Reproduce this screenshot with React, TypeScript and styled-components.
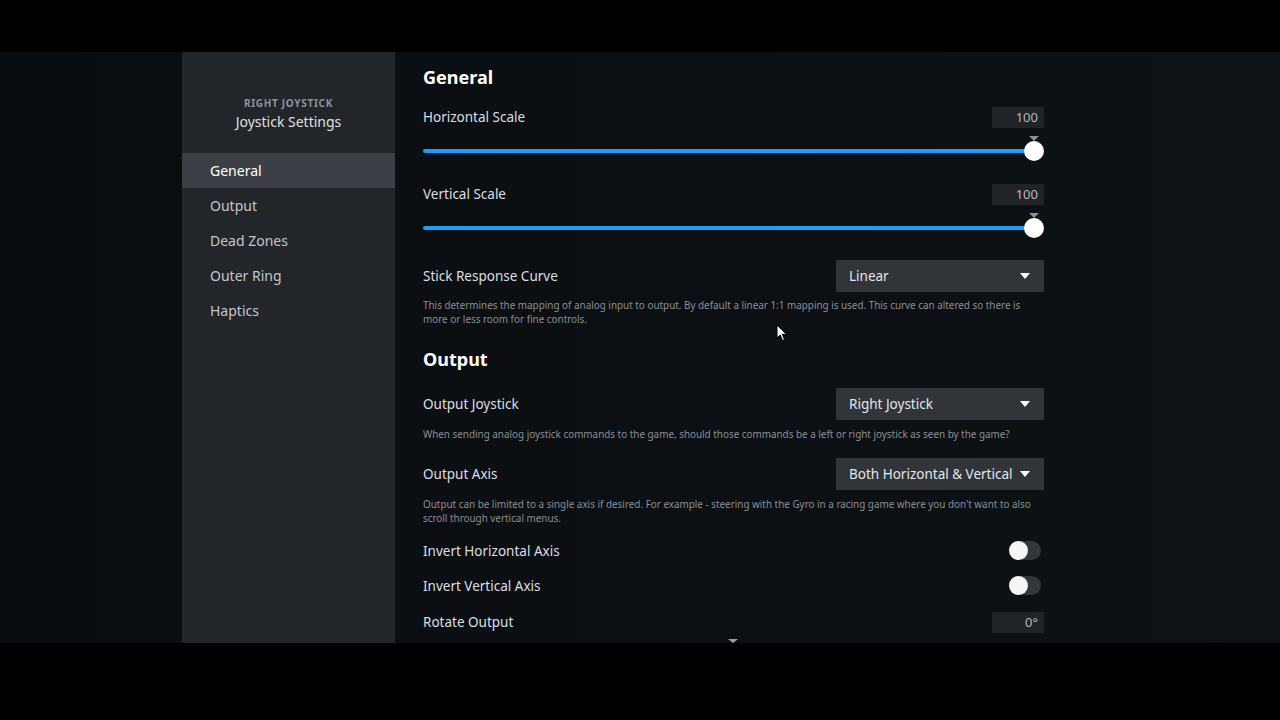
import styled, { createGlobalStyle } from "styled-components";

const GlobalStyle = createGlobalStyle`
  html, body {
    margin: 0;
    padding: 0;
    background: #000;
    font-family: "Noto Sans", "Open Sans", Arial, sans-serif;
  }
`;

const Page = styled.div`
  width: 1280px;
  height: 720px;
  display: flex;
  flex-direction: column;
  background: #000;
  overflow: hidden;
`;

const Letterbox = styled.div<{ $h: number }>`
  height: ${(p) => p.$h}px;
  flex-shrink: 0;
  background: #000;
`;

const Main = styled.div`
  position: relative;
  height: 591px;
  flex-shrink: 0;
  display: flex;
  background: linear-gradient(90deg, #0a0d10 0%, #0c1014 60%, #0d1215 100%);
  overflow: hidden;
`;

const Gutter = styled.div`
  width: 182px;
  flex-shrink: 0;
`;

const Sidebar = styled.nav`
  width: 213px;
  flex-shrink: 0;
  background: #22252a;
  display: flex;
  flex-direction: column;
`;

const SideHeader = styled.div`
  padding: 45px 0 22px;
  display: flex;
  flex-direction: column;
  align-items: center;
  gap: 4px;
`;

const Eyebrow = styled.div`
  font-size: 10px;
  line-height: 12px;
  font-weight: 700;
  letter-spacing: 0.7px;
  color: #8e949a;
`;

const SideTitle = styled.div`
  font-size: 14px;
  line-height: 18px;
  color: #dfe1e3;
`;

const NavItem = styled.div<{ $active?: boolean }>`
  height: 35px;
  flex-shrink: 0;
  display: flex;
  align-items: center;
  padding-left: 28px;
  font-size: 14px;
  color: ${(p) => (p.$active ? "#ffffff" : "#c3c7cb")};
  background: ${(p) => (p.$active ? "#3c4046" : "transparent")};
`;

const Content = styled.div`
  width: 621px;
  padding: 14px 0 0 28px;
  display: flex;
  flex-direction: column;

  & > * {
    flex-shrink: 0;
  }
`;

const SectionTitle = styled.h2<{ $mt?: number }>`
  margin: ${(p) => p.$mt ?? 0}px 0 0;
  font-size: 18px;
  line-height: 22px;
  font-weight: 700;
  color: #ffffff;
`;

const Row = styled.div<{ $h: number; $mt?: number }>`
  height: ${(p) => p.$h}px;
  margin-top: ${(p) => p.$mt ?? 0}px;
  display: flex;
  align-items: center;
  justify-content: space-between;
`;

const Label = styled.span`
  font-size: 13.5px;
  color: #dcdfe2;
`;

const ValueBox = styled.div`
  width: 52px;
  height: 21px;
  box-sizing: border-box;
  padding-right: 6px;
  background: #202327;
  color: #b6babe;
  font-size: 13px;
  display: flex;
  align-items: center;
  justify-content: flex-end;
`;

const SliderArea = styled.div`
  position: relative;
  height: 55px;
`;

const Track = styled.div`
  position: absolute;
  left: 0;
  right: 10px;
  top: 21px;
  height: 4px;
  border-radius: 2px;
  background: #1a9fff;
`;

const Thumb = styled.div`
  position: absolute;
  right: 0;
  top: 13px;
  width: 20px;
  height: 20px;
  border-radius: 50%;
  background: #ffffff;
`;

const Notch = styled.div`
  position: absolute;
  right: 5px;
  top: 8px;
  width: 0;
  height: 0;
  border-left: 5px solid transparent;
  border-right: 5px solid transparent;
  border-top: 5px solid #8a9096;
`;

const Dropdown = styled.div`
  width: 208px;
  height: 32px;
  box-sizing: border-box;
  padding: 0 14px 0 13px;
  background: #31353a;
  display: flex;
  align-items: center;
  justify-content: space-between;
  font-size: 13.5px;
  color: #e4e6e8;
`;

const Caret = styled.span`
  width: 0;
  height: 0;
  border-left: 5px solid transparent;
  border-right: 5px solid transparent;
  border-top: 6px solid #ffffff;
`;

const Desc = styled.p<{ $mt?: number }>`
  margin: ${(p) => p.$mt ?? 0}px 0 0;
  font-size: 9.9px;
  line-height: 14px;
  color: #8b9096;
`;

const Toggle = styled.div`
  position: relative;
  width: 32px;
  height: 19px;
  margin-right: 3px;
  border-radius: 10px;
  background: #33373c;
`;

const Knob = styled.div`
  position: absolute;
  left: 0;
  top: 0;
  width: 19px;
  height: 19px;
  border-radius: 50%;
  background: #f4f5f6;
`;

const ScrollHint = styled.div`
  position: absolute;
  left: 728px;
  bottom: 0;
  width: 0;
  height: 0;
  border-left: 5px solid transparent;
  border-right: 5px solid transparent;
  border-top: 4px solid #9aa0a6;
`;

const Cursor = styled.svg`
  position: absolute;
  left: 776px;
  top: 272px;
`;

const Slider = ({ label, value, mt }: { label: string; value: string; mt: number }) => (
  <>
    <Row $h={22} $mt={mt}>
      <Label>{label}</Label>
      <ValueBox>{value}</ValueBox>
    </Row>
    <SliderArea>
      <Track />
      <Notch />
      <Thumb />
    </SliderArea>
  </>
);

const Select = ({ label, value, mt }: { label: string; value: string; mt: number }) => (
  <Row $h={32} $mt={mt}>
    <Label>{label}</Label>
    <Dropdown>
      {value}
      <Caret />
    </Dropdown>
  </Row>
);

const Switch = ({ label, mt }: { label: string; mt?: number }) => (
  <Row $h={35} $mt={mt}>
    <Label>{label}</Label>
    <Toggle>
      <Knob />
    </Toggle>
  </Row>
);

const App = () => {
  const nav = ["General", "Output", "Dead Zones", "Outer Ring", "Haptics"];
  return (
    <Page>
      <GlobalStyle />
      <Letterbox $h={52} />
      <Main>
        <Gutter />
        <Sidebar>
          <SideHeader>
            <Eyebrow>RIGHT JOYSTICK</Eyebrow>
            <SideTitle>Joystick Settings</SideTitle>
          </SideHeader>
          {nav.map((n, i) => (
            <NavItem key={n} $active={i === 0}>
              {n}
            </NavItem>
          ))}
        </Sidebar>
        <Content>
          <SectionTitle>General</SectionTitle>
          <Slider label="Horizontal Scale" value="100" mt={18} />
          <Slider label="Vertical Scale" value="100" mt={0} />
          <Select label="Stick Response Curve" value="Linear" mt={0} />
          <Desc $mt={6}>
            This determines the mapping of analog input to output. By default a linear 1:1 mapping is used. This
            curve can altered so there is more or less room for fine controls.
          </Desc>
          <SectionTitle $mt={22}>Output</SectionTitle>
          <Select label="Output Joystick" value="Right Joystick" mt={18} />
          <Desc $mt={7}>
            When sending analog joystick commands to the game, should those commands be a left or right joystick as
            seen by the game?
          </Desc>
          <Select label="Output Axis" value="Both Horizontal & Vertical" mt={17} />
          <Desc $mt={7}>
            Output can be limited to a single axis if desired. For example - steering with the Gyro in a racing game
            where you don't want to also scroll through vertical menus.
          </Desc>
          <Switch label="Invert Horizontal Axis" mt={8} />
          <Switch label="Invert Vertical Axis" />
          <Row $h={38}>
            <Label>Rotate Output</Label>
            <ValueBox>0°</ValueBox>
          </Row>
        </Content>
        <ScrollHint />
        <Cursor width="12" height="18" viewBox="0 0 12 18">
          <path d="M1 1 L1 14 L4.2 11 L6.5 16.5 L8.5 15.6 L6.3 10.3 L10.5 10.3 Z" fill="#fff" stroke="#000" strokeWidth="1" />
        </Cursor>
      </Main>
      <Letterbox $h={77} />
    </Page>
  );
};

export default App;
